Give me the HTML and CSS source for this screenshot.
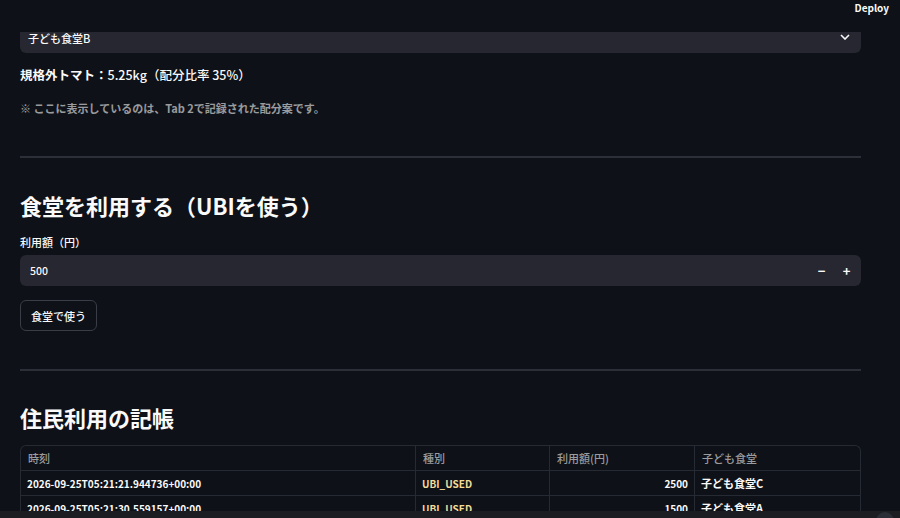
FILE: index.html
```html
<!DOCTYPE html>
<html lang="ja">
<head>
    <meta charset="UTF-8">
    <meta name="viewport" content="width=device-width, initial-scale=1.0">
    <title>子ども食堂 UBI</title>
    <link rel="stylesheet" href="styles.css">
</head>
<body>
    <header class="topbar">
        <span class="deploy">Deploy</span>
    </header>

    <main class="main">
        <div class="select">
            <span>子ども食堂B</span>
            <svg class="chevron" width="10" height="6" viewBox="0 0 10 6">
                <path d="M1 1l4 4 4-4" fill="none" stroke="#fafafa" stroke-width="1.6"/>
            </svg>
        </div>

        <p class="result"><b>規格外トマト：</b>5.25kg（配分比率 35%）</p>
        <p class="note">※ ここに表示しているのは、Tab 2で記録された配分案です。</p>

        <hr class="divider">

        <h2 class="heading">食堂を利用する（UBIを使う）</h2>
        <label class="label" for="amount">利用額（円）</label>
        <div class="number">
            <input type="text" id="amount" value="500">
            <span class="step">−</span>
            <span class="step">+</span>
        </div>
        <button class="btn">食堂で使う</button>

        <hr class="divider second">

        <h2 class="heading ledger-title">住民利用の記帳</h2>
        <div class="grid">
            <div class="row head">
                <div class="cell">時刻</div>
                <div class="cell">種別</div>
                <div class="cell">利用額(円)</div>
                <div class="cell">子ども食堂</div>
            </div>
            <div class="row">
                <div class="cell">2026-09-25T05:21:21.944736+00:00</div>
                <div class="cell kind">UBI_USED</div>
                <div class="cell num">2500</div>
                <div class="cell">子ども食堂C</div>
            </div>
            <div class="row">
                <div class="cell">2026-09-25T05:21:30.559157+00:00</div>
                <div class="cell kind">UBI_USED</div>
                <div class="cell num">1500</div>
                <div class="cell">子ども食堂A</div>
            </div>
        </div>
    </main>

    <div class="statusbar"><span class="dot"></span></div>
</body>
</html>
```

FILE: styles.css
```css
body {
    font-family: "Noto Sans CJK JP", "Noto Sans", sans-serif;
    margin: 0;
    padding: 0;
    background-color: #0e1117;
    color: #fafafa;
    overflow: hidden;
    height: 518px;
}
.topbar {
    position: fixed;
    top: 0;
    left: 0;
    right: 0;
    height: 32px;
    background-color: #0e1117;
    z-index: 5;
}
.deploy {
    position: absolute;
    right: 11px;
    top: 0;
    font-size: 10px;
    font-weight: 600;
    line-height: 16px;
}
.main {
    width: 841px;
    padding: 23px 0 0 20px;
}
.select {
    height: 30px;
    background-color: #262730;
    border-radius: 6px;
    display: flex;
    align-items: center;
    justify-content: space-between;
    padding: 0 11px 0 8px;
    font-size: 11px;
    font-weight: 500;
}
.chevron {
    margin-top: -2px;
}
.result {
    margin: 12px 0 0;
    font-size: 12.5px;
    line-height: 20px;
    font-weight: 500;
}
.result b {
    font-weight: 700;
}
.note {
    margin: 14px 0 0;
    font-size: 11px;
    line-height: 18px;
    color: rgba(250, 250, 250, 0.6);
    font-weight: 600;
}
.divider {
    margin: 39px 0 0;
    border: none;
    height: 2px;
    background-color: #2c2f37;
}
.heading {
    margin: 32px 0 0;
    font-size: 22px;
    line-height: 30px;
    font-weight: 700;
}
.label {
    display: block;
    margin-top: 14px;
    font-size: 11px;
    line-height: 16px;
    font-weight: 500;
}
.number {
    margin-top: 5px;
    height: 31px;
    background-color: #262730;
    border-radius: 6px;
    display: flex;
    align-items: center;
}
.number input {
    flex: 1;
    background: transparent;
    border: none;
    color: #fafafa;
    font-family: inherit;
    font-size: 10.5px;
    font-weight: 500;
    padding: 0 0 0 10px;
    outline: none;
}
.step {
    width: 25px;
    text-align: center;
    font-size: 13px;
    font-weight: 700;
    line-height: 31px;
}
.step:last-child {
    margin-right: 2px;
}
.btn {
    display: block;
    margin-top: 14px;
    height: 31px;
    padding: 0 10px;
    background-color: #0e1117;
    color: #fafafa;
    border: 1px solid #3a3d46;
    border-radius: 6px;
    font-family: inherit;
    font-size: 11px;
    font-weight: 500;
}
.second {
    margin-top: 38px;
}
.ledger-title {
    margin-top: 31px;
}
.grid {
    margin-top: 13px;
    border: 1px solid #262a33;
    border-bottom: none;
    border-radius: 6px 6px 0 0;
    font-size: 10px;
}
.row {
    display: grid;
    grid-template-columns: 395px 134px 145px 1fr;
    height: 24px;
    border-bottom: 1px solid #262a33;
}
.row.head {
    height: 24px;
    font-size: 11px;
    color: rgba(250, 250, 250, 0.6);
}
.cell {
    border-right: 1px solid #262a33;
    display: flex;
    align-items: center;
    padding: 0 6px;
    font-weight: 600;
    white-space: nowrap;
}
.head .cell {
    font-weight: 500;
    padding-left: 7px;
}
.cell:last-child {
    border-right: none;
    font-size: 11px;
    font-weight: 700;
}
.head .cell:last-child {
    font-weight: 500;
}
.kind {
    color: #f4dc98;
}
.num {
    justify-content: flex-end;
}
.statusbar {
    position: fixed;
    left: 0;
    right: 0;
    bottom: 0;
    height: 7px;
    background-color: #1b1d23;
    z-index: 5;
}
.dot {
    position: absolute;
    right: 6px;
    top: 1px;
    width: 18px;
    height: 18px;
    border-radius: 50%;
    background-color: #2b2e36;
}
```
